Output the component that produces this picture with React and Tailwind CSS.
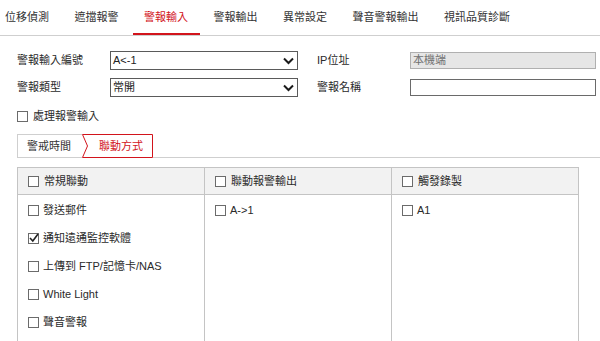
import React from "react";

const RED = "#d2141c";

function Check({ checked }) {
  return (
    <span className="relative inline-block w-[11px] h-[11px] shrink-0 border border-[#6b6b6b] bg-white">
      {checked && (
        <svg className="absolute left-[-1px] top-[-2px]" width="12" height="12" viewBox="0 0 12 12">
          <polyline points="2,6 4.8,9 10,2" fill="none" stroke="#222" strokeWidth="1.6" />
        </svg>
      )}
    </span>
  );
}

function Arrow() {
  return (
    <svg width="11" height="8" viewBox="0 0 11 8">
      <polyline points="1,1.5 5.5,6 10,1.5" fill="none" stroke="#1a1a1a" strokeWidth="2" />
    </svg>
  );
}

function Select({ value }) {
  return (
    <div className="flex items-center justify-between w-[188px] h-[19px] border border-[#5a5a5a] bg-white pl-[2px] pr-[3px] text-[#222]">
      <span>{value}</span>
      <Arrow />
    </div>
  );
}

function Item({ label, checked }) {
  return (
    <div className="flex items-center gap-[4px] h-[28px] text-[#2a2a2a]">
      <Check checked={checked} />
      <span>{label}</span>
    </div>
  );
}

export default function App() {
  const tabs = ["位移偵測", "遮擋報警", "警報輸入", "警報輸出", "異常設定", "聲音警報輸出", "視訊品質診斷"];
  return (
    <div className="w-[600px] h-[341px] overflow-hidden bg-white font-['Liberation_Sans','Noto_Sans_CJK_TC',sans-serif] text-[11px] text-[#2a2a2a]">
      {/* top tabs */}
      <div className="flex h-[36px] border-b border-[#cfcfcf]">
        {tabs.map((t, i) => (
          <div
            key={t}
            className={
              "flex items-center h-[35px] pt-[2px] mr-[2.5px] border-b-2 " +
              (i === 0 ? "pl-[5px] pr-[11.5px] " : "px-[11.5px] ") +
              (i === 2 ? "border-[#d2141c] text-[#d2141c]" : "border-transparent text-[#333]")
            }
          >
            {t}
          </div>
        ))}
      </div>

      {/* form */}
      <div className="pl-[17px] mt-[15px] flex flex-col gap-[8px]">
        <div className="flex items-center h-[19px]">
          <span className="w-[93px]">警報輸入編號</span>
          <Select value="A<-1" />
          <span className="w-[93px] ml-[19px]">IP位址</span>
          <div className="flex items-center w-[186px] h-[17px] border border-[#b0b0b0] bg-[#e6e6e6] pl-[2px] text-[#707070]">
            本機端
          </div>
        </div>
        <div className="flex items-center h-[19px]">
          <span className="w-[93px]">警報類型</span>
          <Select value="常開" />
          <span className="w-[93px] ml-[19px]">警報名稱</span>
          <div className="w-[186px] h-[17px] border border-[#6a6a6a] bg-white" />
        </div>
      </div>

      <div className="pl-[17px] mt-[10px] flex items-center gap-[5px] h-[19px]">
        <Check />
        <span>處理報警輸入</span>
      </div>

      {/* sub tabs */}
      <div className="ml-[17px] mt-[8px] flex h-[24px]">
        <div className="w-[65px] h-[24px] border-l border-t border-b border-[#cfcfcf] pl-[9px] flex items-center text-[#333]">
          警戒時間
        </div>
        <div className="relative w-[71px] h-[24px] flex items-center pl-[17px] text-[#d2141c]">
          <svg className="absolute left-0 top-0" width="71" height="24" viewBox="0 0 71 24">
            <polygon points="0.5,0.5 70.5,0.5 70.5,23.5 0.5,23.5 5.5,12" fill="none" stroke={RED} strokeWidth="1" />
          </svg>
          <span className="relative">聯動方式</span>
        </div>
        <div className="flex-1 h-[24px] border-b border-[#cfcfcf]" />
      </div>

      {/* table */}
      <div className="ml-[17px] mt-[9px] w-[562px] grid grid-cols-[187px_187px_187px] border-l border-t border-[#c4c4c4]">
        <div className="h-[27px] bg-[#f2f2f2] border-r border-b border-[#c4c4c4] pl-[10px] flex items-center gap-[5px]">
          <Check />
          <span>常規聯動</span>
        </div>
        <div className="h-[27px] bg-[#f2f2f2] border-r border-b border-[#c4c4c4] pl-[10px] flex items-center gap-[5px]">
          <Check />
          <span>聯動報警輸出</span>
        </div>
        <div className="h-[27px] bg-[#f2f2f2] border-r border-b border-[#c4c4c4] pl-[10px] flex items-center gap-[5px]">
          <Check />
          <span>觸發錄製</span>
        </div>

        <div className="h-[200px] border-r border-[#c4c4c4] pl-[10px] pt-[1px] flex flex-col">
          <Item label="發送郵件" />
          <Item label="通知遠通監控軟體" checked />
          <Item label="上傳到 FTP/記憶卡/NAS" />
          <Item label="White Light" />
          <Item label="聲音警報" />
        </div>
        <div className="h-[200px] border-r border-[#c4c4c4] pl-[10px] pt-[1px] flex flex-col">
          <Item label="A->1" />
        </div>
        <div className="h-[200px] border-r border-[#c4c4c4] pl-[10px] pt-[1px] flex flex-col">
          <Item label="A1" />
        </div>
      </div>
    </div>
  );
}
